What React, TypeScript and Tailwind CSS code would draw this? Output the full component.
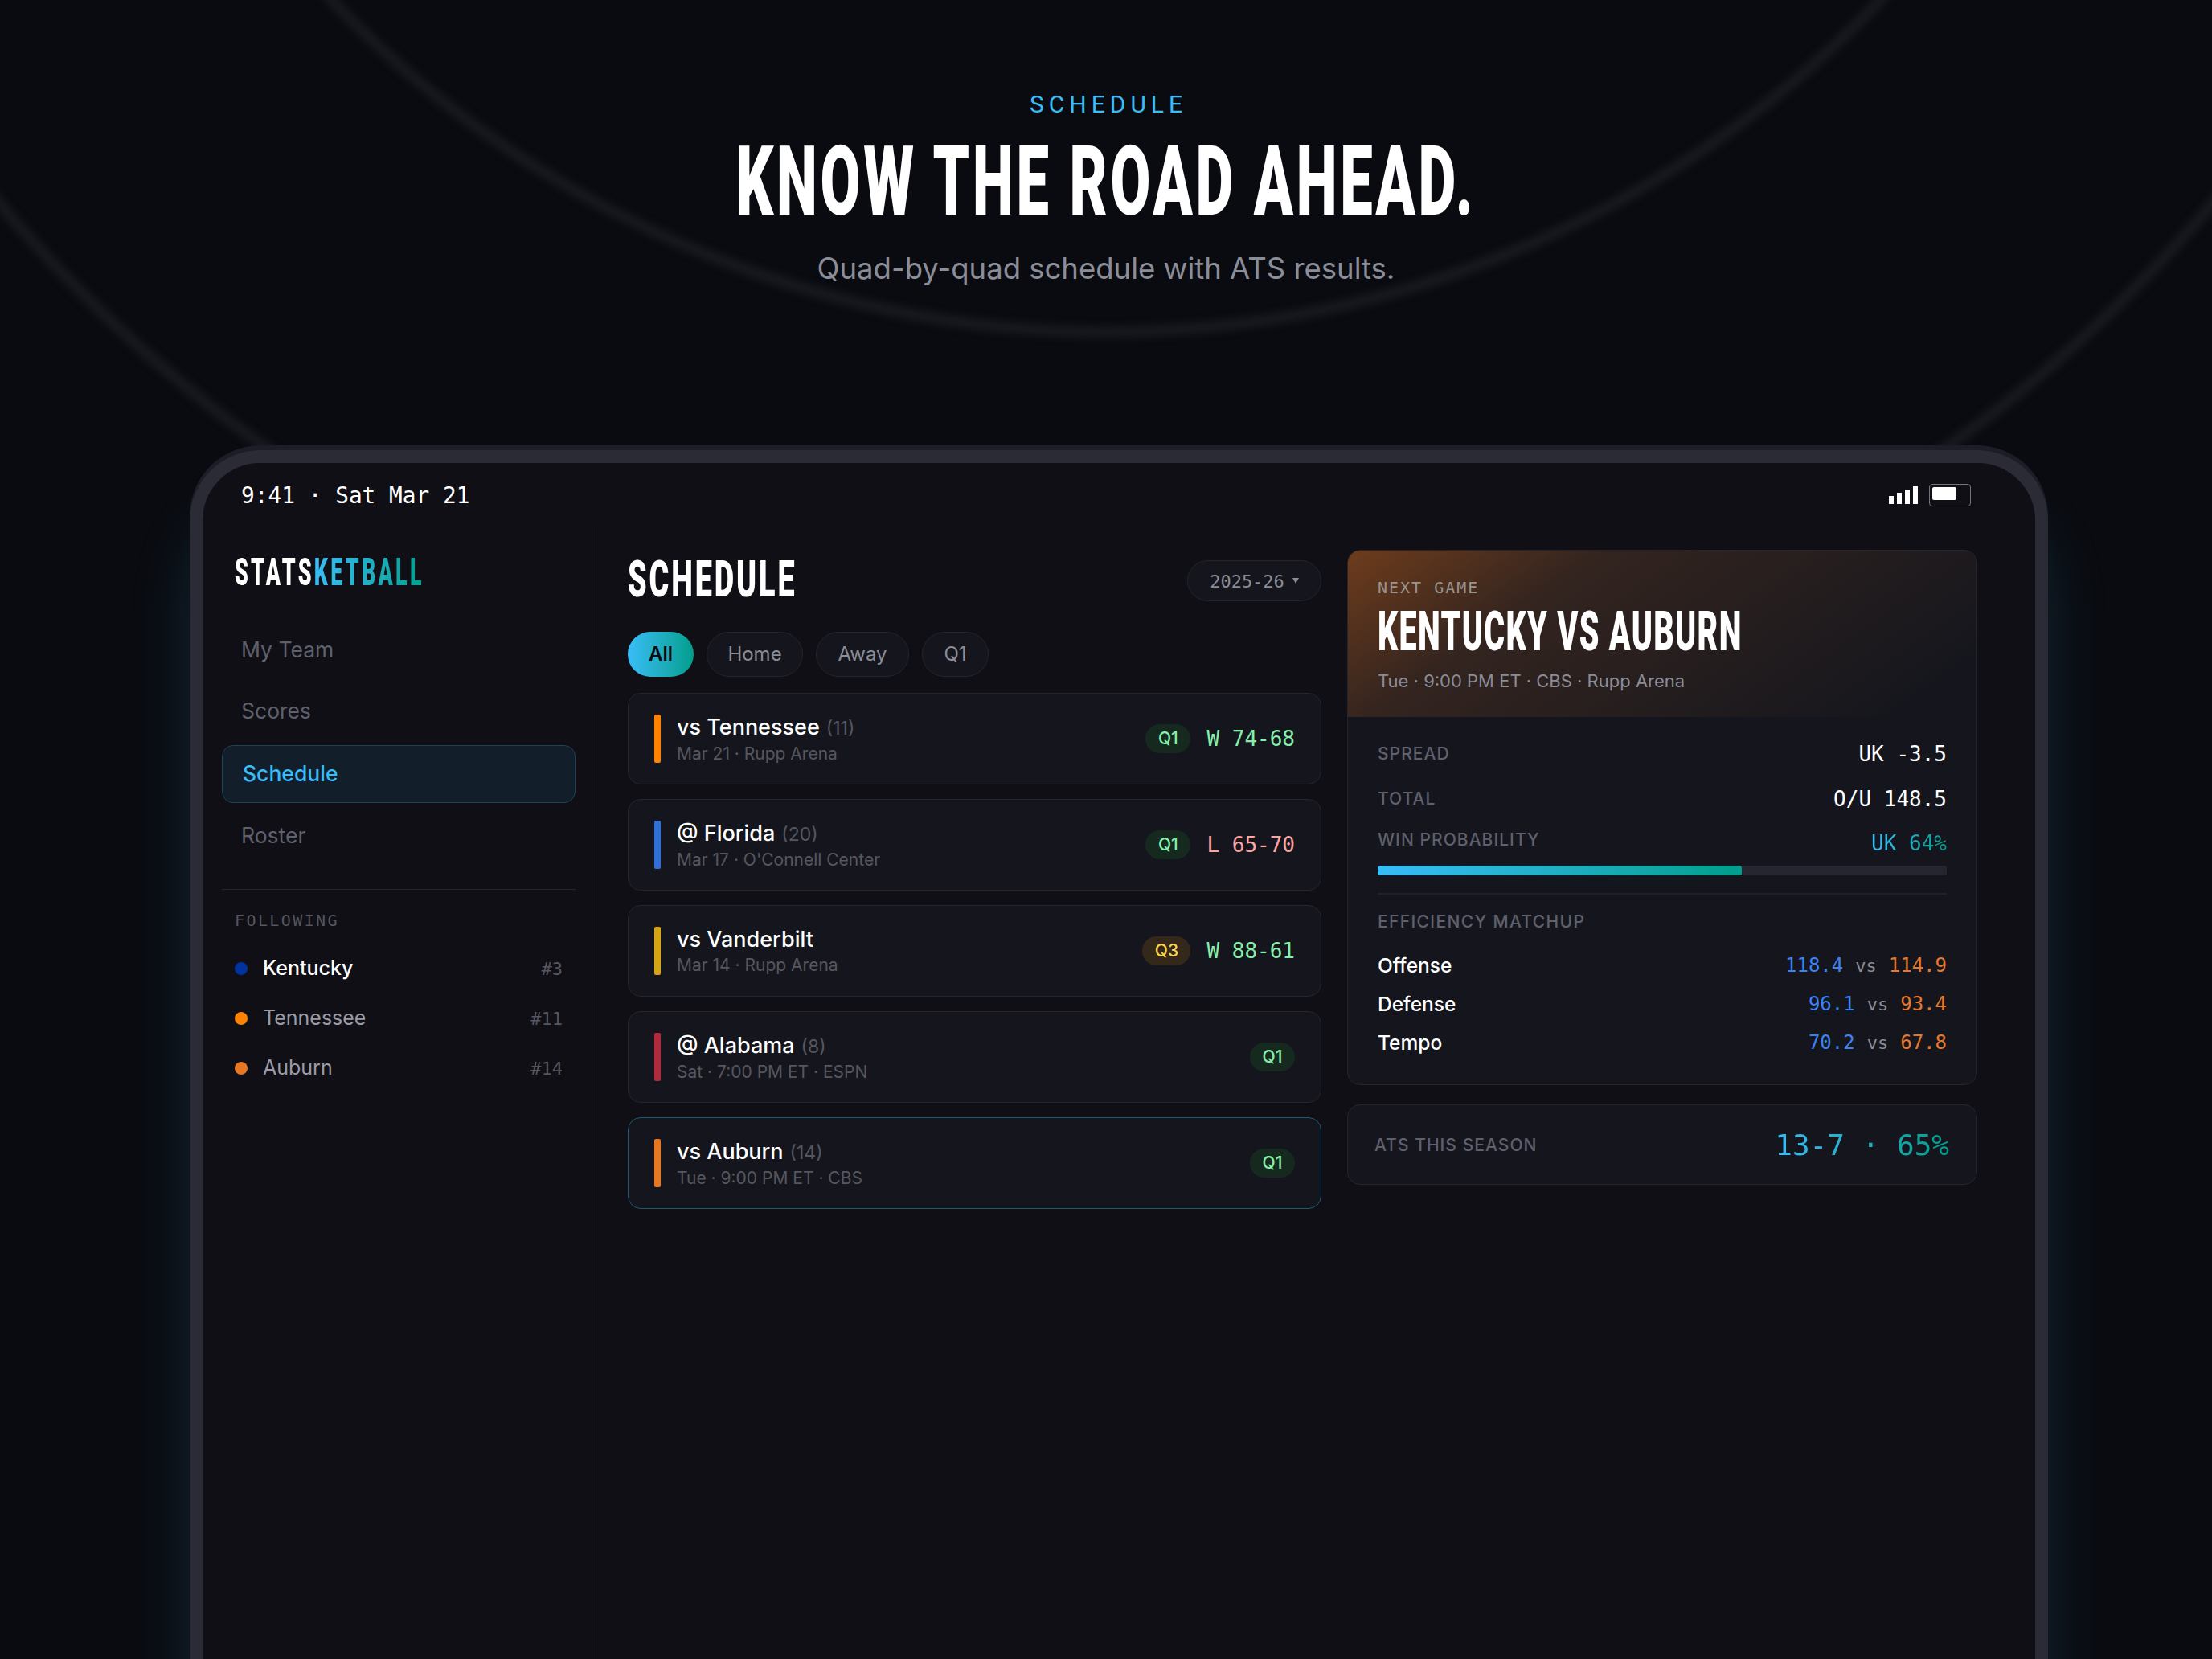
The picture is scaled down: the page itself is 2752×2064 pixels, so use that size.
import React from "react";

const display = "font-['Roboto',sans-serif] font-black inline-block whitespace-nowrap";
const mono = "font-['DejaVu_Sans_Mono',monospace]";
const grad = "bg-linear-to-r from-[#38bdf8] to-[#009e8c] bg-clip-text text-transparent";
const label = "text-[21px] leading-[24px] font-medium tracking-[0.05em] text-[#5f606d] uppercase";

const games = [
  { name: "vs Tennessee", rank: "(11)", sub: "Mar 21 · Rupp Arena", bar: "bg-[#ff8200]", q: "Q1", res: "W 74-68", win: true, active: false },
  { name: "@ Florida", rank: "(20)", sub: "Mar 17 · O'Connell Center", bar: "bg-[#2f6fd6]", q: "Q1", res: "L 65-70", win: false, active: false },
  { name: "vs Vanderbilt", rank: "", sub: "Mar 14 · Rupp Arena", bar: "bg-[#d4a514]", q: "Q3", res: "W 88-61", win: true, active: false },
  { name: "@ Alabama", rank: "(8)", sub: "Sat · 7:00 PM ET · ESPN", bar: "bg-[#b02a3a]", q: "Q1", res: "", win: false, active: false },
  { name: "vs Auburn", rank: "(14)", sub: "Tue · 9:00 PM ET · CBS", bar: "bg-[#e87722]", q: "Q1", res: "", win: false, active: true },
];

const following = [
  { name: "Kentucky", rank: "#3", dot: "bg-[#0033a0]", text: "text-white font-medium" },
  { name: "Tennessee", rank: "#11", dot: "bg-[#ff8200]", text: "text-[#9a9ba6]" },
  { name: "Auburn", rank: "#14", dot: "bg-[#e87722]", text: "text-[#9a9ba6]" },
];

const matchups = [
  { k: "Offense", a: "118.4", b: "114.9" },
  { k: "Defense", a: "96.1", b: "93.4" },
  { k: "Tempo", a: "70.2", b: "67.8" },
];

function Nav({ children }: { children: React.ReactNode }) {
  return <div className="h-[70px] flex items-center pl-[24px] text-[26.5px] text-[#5f606d]">{children}</div>;
}

function Game({ g }: { g: (typeof games)[number] }) {
  return (
    <div className={`h-[114px] flex items-center px-[32px] rounded-[16px] border bg-[#15161d] ${g.active ? "border-[#1d5a70]" : "border-[#24252d]"}`}>
      <div className={`w-[8px] h-[60px] rounded-[2px] ${g.bar}`} />
      <div className="ml-[20px] flex-1">
        <div className="pt-[1px] leading-[34px] text-[27px] font-medium text-white">
          {g.name}
          {g.rank && <span className="ml-[8px] text-[23px] font-normal text-[#55565f]">{g.rank}</span>}
        </div>
        <div className="mt-[1px] leading-[28px] text-[21px] text-[#55565f]">{g.sub}</div>
      </div>
      <div className={`h-[36px] rounded-full flex items-center justify-center text-[21px] font-medium ${g.q === "Q1" ? "w-[56px] bg-[#16291f] text-[#86efac]" : "w-[60px] bg-[#33281a] text-[#fcd34d]"}`}>{g.q}</div>
      {g.res && <div className={`ml-[20px] text-[26px] whitespace-pre ${mono} ${g.win ? "text-[#86efac]" : "text-[#fca5a5]"}`}>{g.res}</div>}
    </div>
  );
}

export default function App() {
  return (
    <div className="relative w-[2752px] h-[2064px] overflow-hidden bg-[#0a0b10] font-['Inter',sans-serif]">
      <div className="absolute left-[39px] top-[-2254px] w-[2674px] h-[2674px] rounded-full border-[14px] border-[#18191e] blur-[5px]" />
      <div className="absolute left-[-438px] top-[-2731px] w-[3628px] h-[3628px] rounded-full border-[14px] border-[#18191e] blur-[5px]" />

      <header className="relative text-center pt-[114px]">
        <div className="pl-[6px] font-['Roboto',sans-serif] font-normal text-[30px] leading-[32px] tracking-[6px] text-[#38bdf8]">SCHEDULE</div>
        <div className="mt-[18px] h-[124px] flex justify-center">
          <h1 className={`text-[120px] leading-[124px] tracking-[6.2px] text-white scale-x-[0.603] origin-center ${display}`}>KNOW THE ROAD AHEAD.</h1>
        </div>
        <p className="mt-[24px] text-[36.5px] leading-[44px] text-[#8b8d98]">Quad-by-quad schedule with ATS results.</p>
      </header>

      <section className="absolute left-[236px] top-[560px] w-[2312px] h-[1700px] rounded-[88px] border-[16px] border-[#2a2b35] bg-[#0f0f15] shadow-[0_-6px_0_0_#1b1e26,0_80px_80px_0_rgba(56,189,248,0.14)]">
        <div className="h-[80px] flex items-center justify-between pl-[48px] pr-[80px]">
          <div className={`pt-[2px] text-[27.8px] text-white whitespace-pre ${mono}`}>9:41 · Sat Mar 21</div>
          <div className="flex items-center gap-[14px]">
            <div className="flex items-end gap-[4px] h-[22px]">
              <div className="w-[6px] h-[10px] bg-white" />
              <div className="w-[6px] h-[14px] bg-white" />
              <div className="w-[6px] h-[18px] bg-white" />
              <div className="w-[6px] h-[22px] bg-white" />
            </div>
            <div className="w-[52px] h-[28px] rounded-[4px] border border-[#74757c] pl-[3px] pt-[3px]">
              <div className="w-[30px] h-[16px] rounded-[2px] bg-white" />
            </div>
          </div>
        </div>

        <div className="flex">
          <aside className="w-[490px] h-[1500px] pl-[24px] pr-[25px] border-r border-[#22232b] shrink-0">
            <div className="pl-[16px] pt-[32px] h-[78px]">
              <div className={`text-[48px] leading-[48px] tracking-[5.8px] scale-x-[0.56] origin-left ${display}`}>
                <span className="text-white">STATS</span>
                <span className={grad}>KETBALL</span>
              </div>
            </div>
            <nav className="mt-[40px] flex flex-col gap-[6px]">
              <Nav>My Team</Nav>
              <Nav>Scores</Nav>
              <div className="mt-px h-[72px] flex items-center pl-[25px] rounded-[14px] border border-[#1b4257] bg-[#121e2a] text-[26.5px] font-medium text-[#38bdf8]">Schedule</div>
              <Nav>Roster</Nav>
            </nav>
            <div className="mt-[31px] border-t border-[#24252d] pt-[26px]">
              <div className={`pl-[16px] text-[20px] leading-[24px] tracking-[2.4px] text-[#55565f] ${mono}`}>FOLLOWING</div>
              <div className="mt-[17px]">
                {following.map((f) => (
                  <div key={f.name} className="h-[62px] flex items-center px-[16px]">
                    <div className={`w-[16px] h-[16px] rounded-full ${f.dot}`} />
                    <div className={`ml-[19px] flex-1 text-[25px] ${f.text}`}>{f.name}</div>
                    <div className={`text-[22px] text-[#55565f] ${mono}`}>{f.rank}</div>
                  </div>
                ))}
              </div>
            </div>
          </aside>

          <main className="flex-1 flex gap-[32px] pl-[39px]">
            <div className="w-[863px] pt-[32px]">
              <div className="h-[64px] flex items-center justify-between">
                <h2 className={`mt-[2px] text-[63px] leading-[64px] tracking-[4.8px] text-white scale-x-[0.6] origin-left ${display}`}>SCHEDULE</h2>
                <div className={`mt-[5px] h-[51px] w-[167px] rounded-full border border-[#24252d] bg-[#15161d] flex items-center justify-center gap-[10px] text-[22px] text-[#8b8c98] ${mono}`}>
                  <span className="pt-[2px]">2025-26</span>
                  <svg width="8" height="7" viewBox="0 0 8 7" className="fill-[#8b8c98]"><polygon points="0,0 8,0 4,7" /></svg>
                </div>
              </div>
              <div className="mt-[34px] flex gap-[16px] text-[24px]">
                <div className="h-[56px] w-[82px] rounded-full bg-linear-to-r from-[#38bdf8] to-[#009e8c] flex items-center justify-center font-semibold text-[#0a0b10]">All</div>
                <div className="h-[56px] w-[120px] rounded-full border border-[#24252d] bg-[#15161d] flex items-center justify-center text-[#8b8c98]">Home</div>
                <div className="h-[56px] w-[116px] rounded-full border border-[#24252d] bg-[#15161d] flex items-center justify-center text-[#8b8c98]">Away</div>
                <div className="h-[56px] w-[83px] rounded-full border border-[#24252d] bg-[#15161d] flex items-center justify-center text-[#8b8c98]">Q1</div>
              </div>
              <div className="mt-[20px] flex flex-col gap-[18px]">
                {games.map((g) => <Game key={g.name} g={g} />)}
              </div>
            </div>

            <div className="w-[784px] pt-[28px]">
              <div className="rounded-[16px] border border-[#24252d] bg-[#15161d] overflow-hidden">
                <div className="h-[207px] px-[37px] pt-[34px] bg-linear-[145deg] from-[#6e3c1c] via-[#33241f] via-30% to-[#15161d] to-90%">
                  <div className={`text-[20px] leading-[24px] tracking-[2px] text-[#9a948e] whitespace-pre ${mono}`}>NEXT GAME</div>
                  <div className={`block mt-[9px] text-[68px] leading-[68px] tracking-[2.3px] text-white scale-x-[0.58] origin-left ${display}`}>KENTUCKY VS AUBURN</div>
                  <div className="mt-[11px] text-[22px] leading-[32px] text-[#8b8c98]">Tue · 9:00 PM ET · CBS · Rupp Arena</div>
                </div>
                <div className="px-[37px] pt-[30px] pb-[28px]">
                  <div className="h-[32px] flex items-center justify-between">
                    <div className={label}>Spread</div>
                    <div className={`text-[26px] text-white whitespace-pre ${mono}`}>UK -3.5</div>
                  </div>
                  <div className="mt-[24px] h-[32px] flex items-center justify-between">
                    <div className={label}>Total</div>
                    <div className={`text-[26px] text-white whitespace-pre ${mono}`}>O/U 148.5</div>
                  </div>
                  <div className="mt-[23px] h-[32px] flex items-start justify-between">
                    <div className={label}>Win Probability</div>
                    <div className={`text-[26px] leading-[32px] whitespace-pre ${mono} ${grad}`}>UK 64%</div>
                  </div>
                  <div className="mt-[12px] h-[12px] rounded-[3px] bg-[#25262f] overflow-hidden">
                    <div className="w-[64%] h-full rounded-[3px] bg-linear-to-r from-[#38bdf8] to-[#009e8c]" />
                  </div>
                  <div className="mt-[22px] h-[2px] bg-[#1f2028]" />
                  <div className="mt-[22px] text-[21px] leading-[24px] font-medium tracking-[0.065em] text-[#5f606d] uppercase">Efficiency Matchup</div>
                  <div className="mt-[18px]">
                    {matchups.map((m) => (
                      <div key={m.k} className="h-[48px] flex items-center justify-between">
                        <div className="text-[24.5px] font-medium text-white">{m.k}</div>
                        <div className={`flex items-center ${mono}`}>
                          <span className="text-[24px] text-[#3b82f6]">{m.a}</span>
                          <span className="mx-[15px] text-[22px] text-[#8b8c98]">vs</span>
                          <span className="text-[24px] text-[#e8782a]">{m.b}</span>
                        </div>
                      </div>
                    ))}
                  </div>
                </div>
              </div>
              <div className="mt-[24px] h-[100px] rounded-[16px] border border-[#24252d] bg-[#15161d] flex items-center justify-between pl-[33px] pr-[34px] pt-[2px]">
                <div className={label}>ATS this season</div>
                <div className={`text-[36px] whitespace-pre ${mono} ${grad}`}>13-7 · 65%</div>
              </div>
            </div>
          </main>
        </div>
      </section>
    </div>
  );
}
